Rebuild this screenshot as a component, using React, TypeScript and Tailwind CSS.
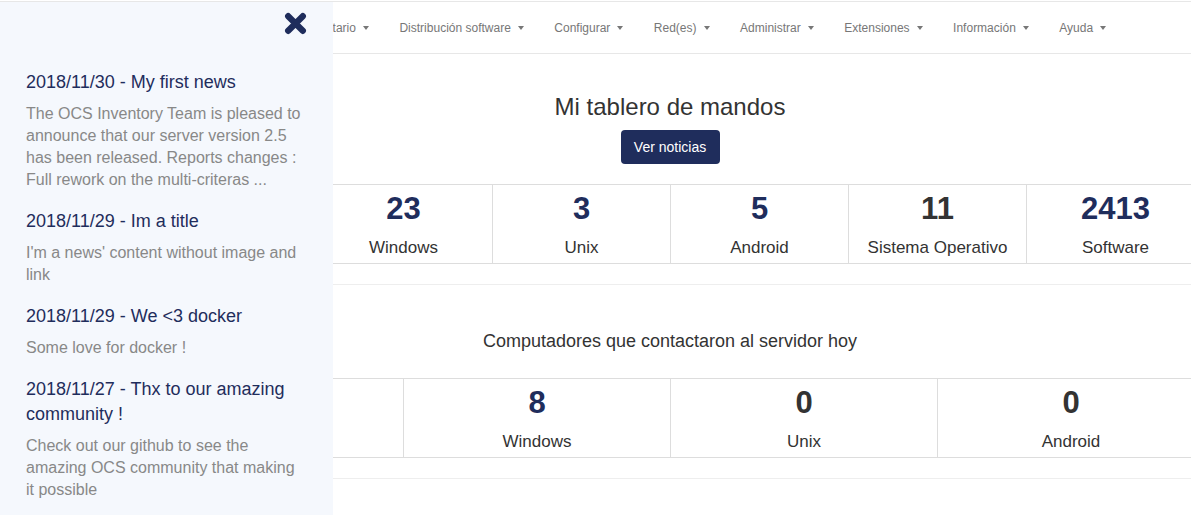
import React from "react";

const navItems = [
  "Inventario",
  "Distribución software",
  "Configurar",
  "Red(es)",
  "Administrar",
  "Extensiones",
  "Información",
  "Ayuda",
];

const news = [
  {
    title: "2018/11/30 - My first news",
    body: "The OCS Inventory Team is pleased to announce that our server version 2.5 has been released. Reports changes : Full rework on the multi-criteras ...",
  },
  { title: "2018/11/29 - Im a title", body: "I'm a news' content without image and link" },
  { title: "2018/11/29 - We <3 docker", body: "Some love for docker !" },
  {
    title: "2018/11/27 - Thx to our amazing community !",
    body: "Check out our github to see the amazing OCS community that making it possible",
  },
];

// first cell of each row sits under the news panel
const allStats = [
  { value: "", label: "", link: true },
  { value: "23", label: "Windows", link: true },
  { value: "3", label: "Unix", link: true },
  { value: "5", label: "Android", link: true },
  { value: "11", label: "Sistema Operativo", link: false },
  { value: "2413", label: "Software", link: true },
];

const todayStats = [
  { value: "", label: "", link: true },
  { value: "8", label: "Windows", link: true },
  { value: "0", label: "Unix", link: false },
  { value: "0", label: "Android", link: false },
];

const Caret = () => (
  <span className="ml-[7px] inline-block h-0 w-0 border-x-[3.5px] border-t-[4px] border-x-transparent border-t-[#777] align-middle" />
);

const StatCell = ({ value, label, link, first }: { value: string; label: string; link: boolean; first?: boolean }) => (
  <div className={`flex h-[78px] flex-col items-center ${first ? "" : "border-l border-[#ddd]"}`}>
    <span className={`mt-[8px] h-[32px] text-[31px] font-bold leading-[32px] ${link ? "text-[#1f2d5c]" : "text-[#333]"}`}>{value}</span>
    <span className="mt-[13px] text-[17px] leading-[20px] text-[#333]">{label}</span>
  </div>
);

export default function App() {
  return (
    <div className="relative h-[515px] w-[1191px] overflow-hidden bg-white font-['Liberation_Sans',Arial,sans-serif]">
      {/* Navbar */}
      <div className="mt-[1px] flex h-[53px] items-center border-y border-[#e7e7e7] pl-[288px]">
        {navItems.map((item) => (
          <div key={item} className="flex items-center px-[15.25px] text-[12px] text-[#777]">
            <span>{item}</span>
            <Caret />
          </div>
        ))}
      </div>

      {/* Page content */}
      <div className="ml-[136px] w-[1068px]">
        <div className="flex flex-col items-center pt-[39px]">
          <h2 className="text-[24px] leading-[28px] text-[#333]">Mi tablero de mandos</h2>
          <button className="mt-[9px] h-[34px] w-[99px] rounded-[4px] bg-[#1f2d5c] text-[14px] text-white">Ver noticias</button>
        </div>
        <div className="mt-[20px] grid grid-cols-6 border-y border-[#ddd]">
          {allStats.map((s, i) => (
            <StatCell key={i} {...s} first={i === 0} />
          ))}
        </div>
        <div className="mt-[20px] border-t border-[#eee]" />
        <div className="flex justify-center pt-[45px]">
          <h3 className="text-[18px] leading-[22px] text-[#333]">Computadores que contactaron al servidor hoy</h3>
        </div>
        <div className="mt-[26px] grid grid-cols-4 border-y border-[#ddd]">
          {todayStats.map((s, i) => (
            <StatCell key={i} {...s} first={i === 0} />
          ))}
        </div>
        <div className="mt-[20px] border-t border-[#eee]" />
      </div>

      {/* News sidebar */}
      <div className="absolute left-0 top-[2px] h-[513px] w-[333px] bg-[#f5f8fd] px-[26px]">
        <div className="flex justify-end pt-[10px]">
          <svg width="23" height="23" viewBox="0 0 22 22">
            <path d="M4 4 L18 18 M18 4 L4 18" stroke="#1f2d5c" strokeWidth="6" strokeLinecap="round" />
          </svg>
        </div>
        <div className="mt-[35px] flex w-[276px] flex-col gap-[18px]">
          {news.map((n) => (
            <div key={n.title}>
              <div className="text-[18px] leading-[25px] text-[#1f2d5c]">{n.title}</div>
              <p className="mt-[8px] text-[16px] leading-[22px] text-[#888]">{n.body}</p>
            </div>
          ))}
        </div>
      </div>
    </div>
  );
}
